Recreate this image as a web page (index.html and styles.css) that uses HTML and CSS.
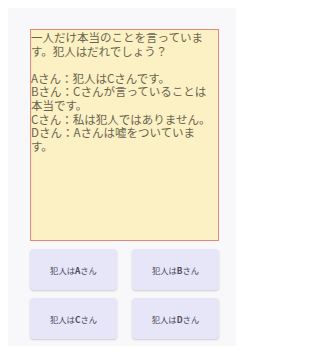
FILE: index.html
```html
<!DOCTYPE html>
<html lang="ja">
<head>
<meta charset="utf-8">
<link rel="stylesheet" href="styles.css">
</head>
<body>
<div class="app">
  <div class="question">一人だけ本当のことを言っています。犯人はだれでしょう？

Aさん：犯人はCさんです。
Bさん：Cさんが言っていることは本当です。
Cさん：私は犯人ではありません。
Dさん：Aさんは嘘をついています。</div>
  <div class="answers">
    <button class="answer">犯人は<b>A</b>さん</button>
    <button class="answer">犯人は<b>B</b>さん</button>
    <button class="answer">犯人は<b>C</b>さん</button>
    <button class="answer">犯人は<b>D</b>さん</button>
  </div>
</div>
</body>
</html>
```
FILE: styles.css
```css
html, body {
  margin: 0;
  background: #ffffff;
}
body {
  padding: 8px;
  font-family: "Noto Sans CJK JP", "Noto Sans", sans-serif;
}
.app {
  box-sizing: border-box;
  width: 228px;
  background: #f8f8fa;
  padding: 21px 17px 7px 22px;
  display: flex;
  flex-direction: column;
  gap: 8px;
}
.question {
  box-sizing: border-box;
  width: 189px;
  height: 212px;
  background: #fcf1c4;
  border: 1px solid #e8877a;
  color: #68654f;
  font-size: 11.5px;
  line-height: 13.6px;
  padding: 1px 5px 0 0;
  white-space: pre-wrap;
  overflow: hidden;
}
.answers {
  width: 189px;
  display: grid;
  grid-template-columns: 87px 87px;
  column-gap: 15px;
  row-gap: 8px;
}
.answer {
  height: 41px;
  border: none;
  border-radius: 4px;
  background: #e7e5f8;
  box-shadow: 0 1px 2px rgba(0, 0, 0, 0.18);
  font-family: "Noto Sans CJK JP", "Noto Sans", sans-serif;
  font-size: 8.3px;
  color: #4a4a55;
  padding: 0;
}
.answer b {
  font-weight: 700;
}
```
